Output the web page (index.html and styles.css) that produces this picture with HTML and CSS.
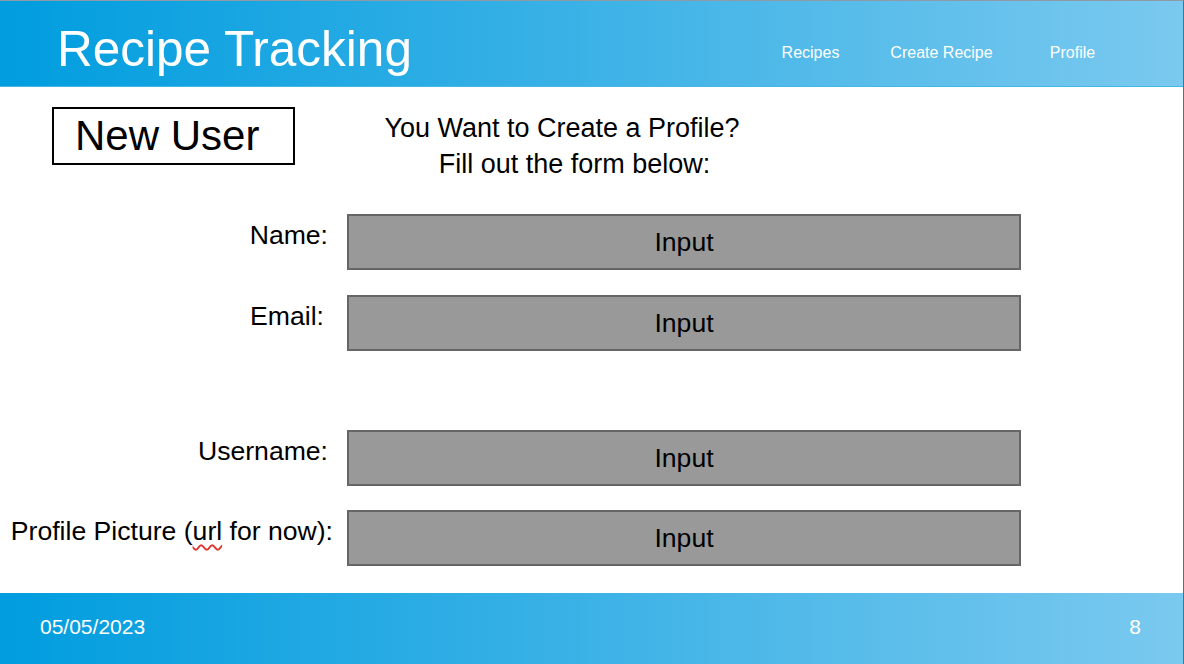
FILE: index.html
```html
<!DOCTYPE html>
<html lang="en">
<head>
<meta charset="utf-8">
<title>Recipe Tracking - New User</title>
<link rel="stylesheet" href="styles.css">
</head>
<body>
<div class="page">
  <header class="topbar">
    <h1 class="brand">Recipe Tracking</h1>
    <nav class="nav">
      <a class="nav-item">Recipes</a>
      <a class="nav-item">Create Recipe</a>
      <a class="nav-item">Profile</a>
    </nav>
  </header>

  <main class="content">
    <section class="intro">
      <div class="badge">New User</div>
      <div class="lead">
        <p class="lead-line">You Want to Create a Profile?</p>
        <p class="lead-line lead-line-2">Fill out the form below:</p>
      </div>
    </section>

    <section class="form">
      <div class="row">
        <div class="label">Name:</div>
        <div class="input">Input</div>
      </div>
      <div class="row">
        <div class="label label-email">Email:</div>
        <div class="input">Input</div>
      </div>
      <div class="row row-spaced">
        <div class="label">Username:</div>
        <div class="input">Input</div>
      </div>
      <div class="row row-last">
        <div class="label label-wide">Profile Picture (<span class="spell">url</span> for now):</div>
        <div class="input">Input</div>
      </div>
    </section>
  </main>

  <footer class="footbar">
    <span class="date">05/05/2023</span>
    <span class="pagenum">8</span>
  </footer>
</div>
</body>
</html>
```

FILE: styles.css
```css
* {
  box-sizing: border-box;
}

html, body {
  margin: 0;
  padding: 0;
  background: #ffffff;
}

body {
  font-family: "Liberation Sans", Arial, sans-serif;
  color: #000000;
}

.page {
  width: 1184px;
  height: 664px;
  display: flex;
  flex-direction: column;
  border-top: 1px solid #8e9ba6;
  border-right: 1px solid #6a6a6a;
  overflow: hidden;
}

.topbar {
  height: 86px;
  flex: 0 0 86px;
  display: flex;
  align-items: flex-start;
  justify-content: space-between;
  background: linear-gradient(to right, #009ddf 0%, #3cb2e6 50%, #7ac9ef 100%);
  border-bottom: 1px solid #45b6e8;
  padding: 0 45px 0 57px;
}

.brand {
  margin: 0;
  padding-top: 19px;
  font-weight: normal;
  font-size: 49.5px;
  line-height: 57px;
  color: #ffffff;
}

.nav {
  display: flex;
  padding-top: 42px;
}

.nav-item {
  width: 131px;
  text-align: center;
  font-size: 16px;
  line-height: 20px;
  color: #ffffff;
  text-decoration: none;
}

.content {
  flex: 1 1 auto;
  display: flex;
  flex-direction: column;
}

.intro {
  display: flex;
  align-items: flex-start;
  padding: 20px 0 0 52px;
}

.badge {
  width: 243px;
  height: 58px;
  border: 2px solid #000000;
  padding-left: 21px;
  font-size: 42px;
  line-height: 54px;
}

.lead {
  margin-left: 88px;
  margin-top: 3px;
  width: 358px;
  text-align: center;
}

.lead-line {
  margin: 0;
  font-size: 27px;
  line-height: 36px;
  white-space: nowrap;
}

.lead-line-2 {
  padding-left: 25px;
}

.form {
  display: flex;
  flex-direction: column;
  gap: 25px;
  margin-top: 32px;
}

.row {
  display: flex;
  align-items: flex-start;
}

.row-spaced {
  margin-top: 54px;
}

.row-last {
  margin-top: -1px;
}

.label {
  width: 334px;
  padding-right: 6px;
  padding-top: 6px;
  text-align: right;
  font-size: 26.6px;
  line-height: 30px;
  white-space: nowrap;
}

.label-email {
  padding-right: 10px;
}

.label-wide {
  padding-right: 1px;
}

.spell {
  text-decoration: underline wavy #e0342c;
  text-decoration-thickness: 1.5px;
  text-underline-offset: 4px;
}

.input {
  margin-left: 13px;
  width: 674px;
  height: 56px;
  background: #999999;
  border: 2px solid #666666;
  display: flex;
  align-items: center;
  justify-content: center;
  font-size: 26.6px;
}

.footbar {
  height: 71px;
  flex: 0 0 71px;
  display: flex;
  align-items: center;
  justify-content: space-between;
  padding: 0 42px 4px 40px;
  background: linear-gradient(to right, #009ddf 0%, #3cb2e6 50%, #7ac9ef 100%);
  color: #ffffff;
  font-size: 21px;
}
```
